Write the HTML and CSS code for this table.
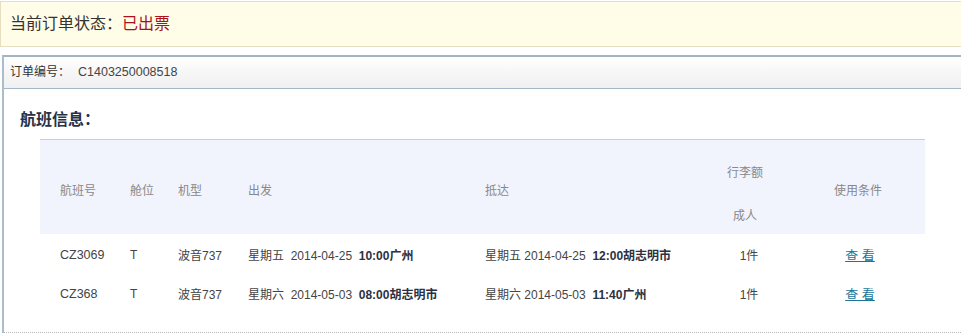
FILE: index.html
```html
<!DOCTYPE html>
<html lang="zh">
<head>
<meta charset="utf-8">
<link rel="stylesheet" href="styles.css">
</head>
<body>
<div class="status">当前订单状态：<span class="status-val">已出票</span></div>
<div class="order">
  <div class="order-head">订单编号：<span class="order-no">C1403250008518</span></div>
  <div class="order-body">
    <h2 class="title">航班信息：</h2>
    <div class="flights">
      <div class="row head">
        <div class="cell">航班号</div>
        <div class="cell">舱位</div>
        <div class="cell">机型</div>
        <div class="cell">出发</div>
        <div class="cell">抵达</div>
        <div class="cell center bag"><span>行李额</span><span>成人</span></div>
        <div class="cell center">使用条件</div>
      </div>
      <div class="row">
        <div class="cell">CZ3069</div>
        <div class="cell">T</div>
        <div class="cell">波音737</div>
        <div class="cell">星期五&nbsp; 2014-04-25&nbsp; <b>10:00广州</b></div>
        <div class="cell">星期五 2014-04-25&nbsp; <b>12:00胡志明市</b></div>
        <div class="cell center qty">1件</div>
        <div class="cell center"><a class="link" href="#">查&nbsp;看</a></div>
      </div>
      <div class="row">
        <div class="cell">CZ368</div>
        <div class="cell">T</div>
        <div class="cell">波音737</div>
        <div class="cell">星期六&nbsp; 2014-05-03&nbsp; <b>08:00胡志明市</b></div>
        <div class="cell">星期六 2014-05-03&nbsp; <b>11:40广州</b></div>
        <div class="cell center qty">1件</div>
        <div class="cell center"><a class="link" href="#">查&nbsp;看</a></div>
      </div>
    </div>
  </div>
</div>
</body>
</html>
```

FILE: styles.css
```css
html, body {
  margin: 0;
  padding: 0;
  background: #fff;
  overflow: hidden;
}
body {
  font-family: "Liberation Sans", Arial, "Noto Sans CJK SC", sans-serif;
  color: #333;
  font-size: 12px;
}
.status {
  margin-top: 1px;
  height: 44px;
  line-height: 44px;
  border: 1px solid #e6dfbf;
  border-right: none;
  background: #fffde7;
  padding-left: 9px;
  font-size: 16px;
  color: #333;
}
.status-val {
  color: #a8141c;
}
.order {
  margin: 8px -12px 0 2px;
  border-top: 2px solid #a3b5c3;
  border-left: 2px solid #a9bdcc;
}
.order-head {
  height: 31px;
  line-height: 31px;
  padding-left: 6px;
  border-bottom: 1px solid #a3b7c9;
  background: linear-gradient(#ffffff, #f5f5f5 60%, #f0f0f2);
  font-size: 12px;
  color: #333;
}
.order-no {
  margin-left: 8px;
  font-size: 12.5px;
  color: #444;
}
.order-body {
  padding: 19px 0 19px 16px;
  border-bottom: 1px dotted #b8b8b8;
}
.title {
  margin: 0;
  font-size: 16px;
  line-height: 20px;
  font-weight: bold;
  color: #283246;
  font-family: "Noto Sans CJK SC", sans-serif;
}
.flights {
  margin: 11px 0 0 20px;
  width: 885px;
}
.row {
  display: grid;
  grid-template-columns: 70px 48px 70px 237px 234px 92px 134px;
  height: 39px;
  align-items: center;
  color: #444;
}
.row.head {
  height: 90px;
  padding-top: 4px;
  border-top: 1px solid #c9ccd9;
  background: #f2f4fd;
  color: #888;
  margin-bottom: 1px;
}
.row .cell {
  padding-left: 20px;
  white-space: nowrap;
}
.row .cell.center {
  padding-left: 0;
  text-align: center;
}
.row .cell.qty {
  padding-left: 8px;
}
.row .bag {
  display: flex;
  flex-direction: column;
  align-items: center;
  gap: 26px;
  padding-top: 7px;
}
.row:not(.head) .cell:first-child {
  font-size: 12.5px;
}
b {
  color: #2c3142;
}
.link {
  color: #1a7598;
  text-decoration: underline;
  font-size: 13px;
  margin-left: 4px;
}
```
